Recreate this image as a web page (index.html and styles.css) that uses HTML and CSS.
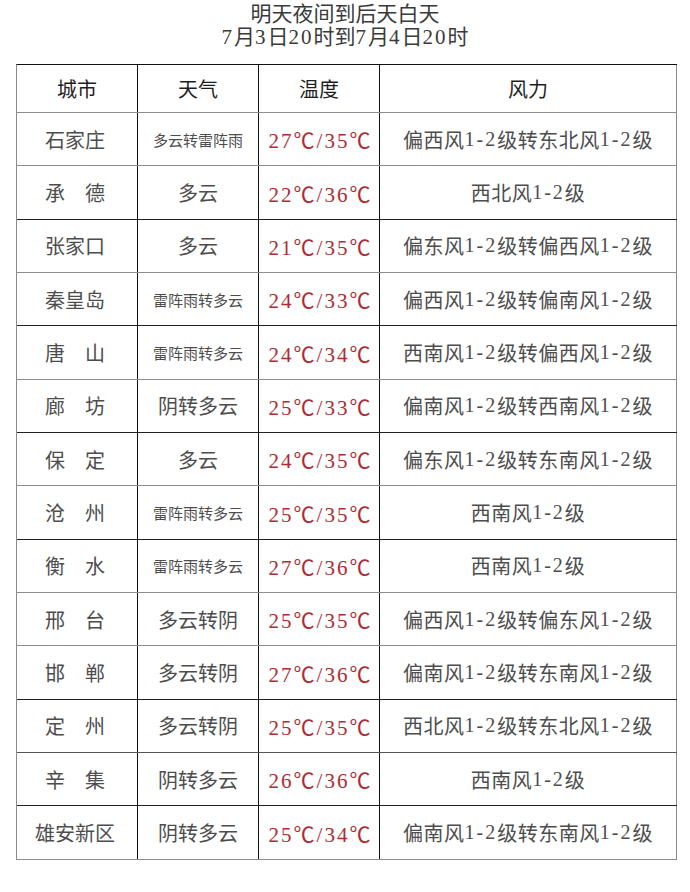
FILE: index.html
```
<!DOCTYPE html>
<html lang="zh-CN">
<head>
<meta charset="utf-8">
<title>明天夜间到后天白天</title>
<link rel="stylesheet" href="styles.css">
</head>
<body>
<div class="page">
  <div class="title">
    <div class="title-line">明天夜间到后天白天</div>
    <div class="title-line"><span class="tn">7</span>月<span class="tn">3</span>日<span class="tn">20</span>时到<span class="tn">7</span>月<span class="tn">4</span>日<span class="tn">20</span>时</div>
  </div>
  <div class="table">
    <div class="row head">
      <div class="cell">城市</div><div class="cell">天气</div><div class="cell">温度</div><div class="cell last">风力</div>
    </div>
    <div class="row">
      <div class="cell city">石家庄</div><div class="cell wx small">多云转雷阵雨</div><div class="cell temp">27℃/35℃</div><div class="cell wind last">偏西风<span class="n">1-2</span>级转东北风<span class="n">1-2</span>级</div>
    </div>
    <div class="row dark">
      <div class="cell city">承　德</div><div class="cell wx">多云</div><div class="cell temp">22℃/36℃</div><div class="cell wind last">西北风<span class="n">1-2</span>级</div>
    </div>
    <div class="row">
      <div class="cell city">张家口</div><div class="cell wx">多云</div><div class="cell temp">21℃/35℃</div><div class="cell wind last">偏东风<span class="n">1-2</span>级转偏西风<span class="n">1-2</span>级</div>
    </div>
    <div class="row dark">
      <div class="cell city">秦皇岛</div><div class="cell wx small">雷阵雨转多云</div><div class="cell temp">24℃/33℃</div><div class="cell wind last">偏西风<span class="n">1-2</span>级转偏南风<span class="n">1-2</span>级</div>
    </div>
    <div class="row">
      <div class="cell city">唐　山</div><div class="cell wx small">雷阵雨转多云</div><div class="cell temp">24℃/34℃</div><div class="cell wind last">西南风<span class="n">1-2</span>级转偏西风<span class="n">1-2</span>级</div>
    </div>
    <div class="row dark">
      <div class="cell city">廊　坊</div><div class="cell wx">阴转多云</div><div class="cell temp">25℃/33℃</div><div class="cell wind last">偏南风<span class="n">1-2</span>级转西南风<span class="n">1-2</span>级</div>
    </div>
    <div class="row">
      <div class="cell city">保　定</div><div class="cell wx">多云</div><div class="cell temp">24℃/35℃</div><div class="cell wind last">偏东风<span class="n">1-2</span>级转东南风<span class="n">1-2</span>级</div>
    </div>
    <div class="row dark">
      <div class="cell city">沧　州</div><div class="cell wx small">雷阵雨转多云</div><div class="cell temp">25℃/35℃</div><div class="cell wind last">西南风<span class="n">1-2</span>级</div>
    </div>
    <div class="row">
      <div class="cell city">衡　水</div><div class="cell wx small">雷阵雨转多云</div><div class="cell temp">27℃/36℃</div><div class="cell wind last">西南风<span class="n">1-2</span>级</div>
    </div>
    <div class="row">
      <div class="cell city">邢　台</div><div class="cell wx">多云转阴</div><div class="cell temp">25℃/35℃</div><div class="cell wind last">偏西风<span class="n">1-2</span>级转偏东风<span class="n">1-2</span>级</div>
    </div>
    <div class="row dark">
      <div class="cell city">邯　郸</div><div class="cell wx">多云转阴</div><div class="cell temp">27℃/36℃</div><div class="cell wind last">偏南风<span class="n">1-2</span>级转东南风<span class="n">1-2</span>级</div>
    </div>
    <div class="row mid">
      <div class="cell city">定　州</div><div class="cell wx">多云转阴</div><div class="cell temp">25℃/35℃</div><div class="cell wind last">西北风<span class="n">1-2</span>级转东北风<span class="n">1-2</span>级</div>
    </div>
    <div class="row dark">
      <div class="cell city">辛　集</div><div class="cell wx">阴转多云</div><div class="cell temp">26℃/36℃</div><div class="cell wind last">西南风<span class="n">1-2</span>级</div>
    </div>
    <div class="row">
      <div class="cell city">雄安新区</div><div class="cell wx">阴转多云</div><div class="cell temp">25℃/34℃</div><div class="cell wind last">偏南风<span class="n">1-2</span>级转东南风<span class="n">1-2</span>级</div>
    </div>
  </div>
</div>
</body>
</html>
```
FILE: styles.css
```
html, body {
  margin: 0;
  padding: 0;
  background: #ffffff;
}

body {
  font-family: "Liberation Serif", "Noto Sans CJK SC", serif;
  color: #4d4d4d;
}

.page {
  width: 690px;
  height: 892px;
  overflow: hidden;
}

.title {
  padding-top: 3px;
  margin-bottom: 15px;
  text-align: center;
  color: #3a3a3a;
  font-size: 21px;
  line-height: 23px;
}

.title-line {
  height: 23px;
}

.tn {
  letter-spacing: 2px;
}

.table {
  margin-left: 16px;
  width: 661px;
  box-sizing: border-box;
  border-left: 1px solid #8a8a8a;
  border-top: 1px solid #111111;
}

.row {
  display: grid;
  grid-template-columns: 121px 121px 121px 297px;
  height: 53.357px;
  box-sizing: border-box;
  border-bottom: 1px solid #8c8c8c;
}

.row.head {
  height: 48px;
  color: #1e1e1e;
}

.row.dark {
  border-bottom-color: #222222;
}

.row.mid {
  border-bottom-color: #555555;
}

.cell {
  display: flex;
  align-items: center;
  justify-content: center;
  border-right: 1px solid #111111;
  font-size: 20px;
  white-space: nowrap;
}

.cell.last {
  border-right-color: #8a8a8a;
}

.city {
  padding-right: 4px;
}

.wx.small {
  font-size: 15px;
}

.temp {
  color: #b02a33;
  font-size: 21px;
  letter-spacing: 2px;
  padding-left: 3px;
}

.wind {
  letter-spacing: 0.5px;
}

.n {
  letter-spacing: 2px;
}
```
